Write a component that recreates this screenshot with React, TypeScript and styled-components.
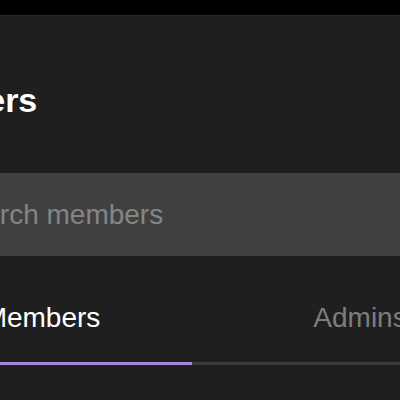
import styled, { createGlobalStyle } from 'styled-components';

const GlobalStyle = createGlobalStyle`
  html, body {
    margin: 0;
    padding: 0;
    background: #1f1f1f;
    overflow: hidden;
  }
  body {
    font-family: "Liberation Sans", Arial, Helvetica, sans-serif;
  }
`;

const Viewport = styled.div`
  width: 400px;
  height: 400px;
  overflow: hidden;
  background: #1f1f1f;
`;

const StatusBar = styled.div`
  height: 15px;
  background: #000000;
  border-bottom: 1px solid #2a2a2a;
`;

const Screen = styled.div`
  margin-left: -120px;
  width: 660px;
  display: flex;
  flex-direction: column;
`;

const Header = styled.header`
  padding: 64px 0 0 8px;
`;

const Title = styled.h1`
  margin: 0;
  font-size: 34px;
  line-height: 40px;
  font-weight: 700;
  color: #ffffff;
`;

const SearchBox = styled.div`
  margin: 53px 0 0 54px;
  height: 83px;
  display: flex;
  align-items: center;
  background: #404040;
  padding: 0 16px;
`;

const SearchInput = styled.input`
  flex: 1;
  border: none;
  outline: none;
  background: transparent;
  font-family: "Liberation Sans", Arial, Helvetica, sans-serif;
  font-size: 28px;
  color: #ffffff;
  padding: 0;

  &::placeholder {
    color: #858585;
  }
`;

const TabBar = styled.div`
  margin: 45px 0 0 12px;
  display: grid;
  grid-template-columns: 300px 336px;
  border-bottom: 3px solid #3a3a3a;
`;

const Tab = styled.button<{ $active?: boolean }>`
  border: none;
  background: transparent;
  margin-bottom: -3px;
  padding: 0 0 27px;
  border-bottom: 3px solid ${props => props.$active ? '#a487db' : 'transparent'};
  font-family: "Liberation Sans", Arial, Helvetica, sans-serif;
  font-size: 28px;
  line-height: 34px;
  color: ${props => props.$active ? '#ffffff' : '#7d7d7d'};
  text-align: center;
  cursor: pointer;
`;

const App = () => (
  <Viewport>
    <GlobalStyle />
    <StatusBar />
    <Screen>
      <Header>
        <Title>Members</Title>
      </Header>
      <SearchBox>
        <SearchInput placeholder="Search members" />
      </SearchBox>
      <TabBar>
        <Tab $active>Members</Tab>
        <Tab>Admins</Tab>
      </TabBar>
    </Screen>
  </Viewport>
);

export default App;
